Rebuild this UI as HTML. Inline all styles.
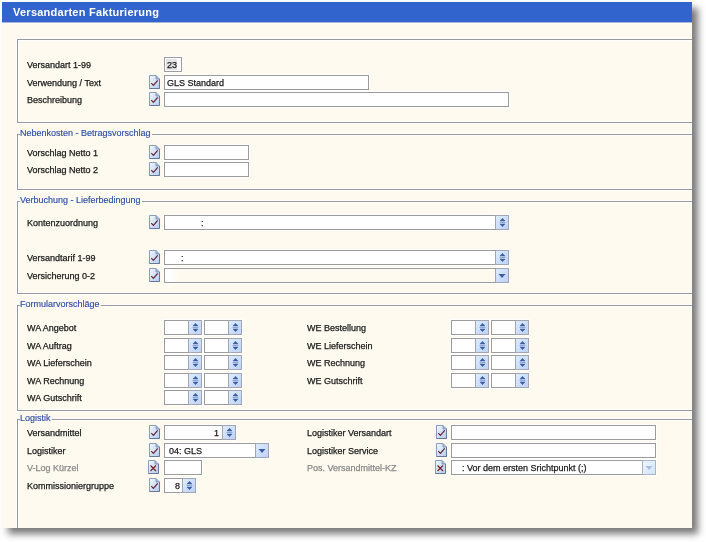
<!DOCTYPE html><html><head><meta charset="utf-8"><style>
html,body{margin:0;padding:0}
body{width:706px;height:542px;overflow:hidden;position:relative;background:#fff;font-family:"Liberation Sans", sans-serif}
#sh{position:absolute;left:2px;top:2px;width:690px;height:526px;box-shadow:6px 6px 7px rgba(0,0,0,0.52)}
#win{position:absolute;left:0;top:0;width:692px;height:528px;overflow:hidden;will-change:transform}
#bg{position:absolute;left:2px;top:2px;width:690px;height:526px;background:#fefaef}
#tb{position:absolute;left:2px;top:2px;width:690px;height:20px;background:#3264cd;box-shadow:0 1px 0 #aab4d6, 0 2px 0 #fff}
#tt{position:absolute;left:13px;top:6px;font-weight:bold;font-size:11px;line-height:13px;color:#fff;letter-spacing:0.25px;white-space:nowrap}
.lb{position:absolute;font-size:9px;line-height:10px;white-space:nowrap;-webkit-text-stroke:0.25px currentColor}
.bx{position:absolute;border:1px solid #9c9c9c;box-shadow:0 0 0 1px rgba(255,255,255,0.85)}
.bt{position:absolute;width:12px;height:13px;border:1px solid #a3a6b0;background:linear-gradient(135deg,#dcecff,#c0d2f6)}
.bt svg{position:absolute;left:0;top:0}
.bt.dis{background:linear-gradient(135deg,#eef5ff,#d4e4fa);border-color:#a9b4c4}
.ic{position:absolute;width:11px;height:14px}
.ic svg{display:block}
.gb{position:absolute;left:17px;width:700px;border:1px solid #9a9a9a;box-shadow:inset 0 0 0 1px #fff, 0 0 0 1px #fff}
.lg{position:absolute;left:20px;font-size:9px;-webkit-text-stroke:0.15px currentColor;line-height:14px;color:#2e4ea8;background:#fefaef;padding:0 1px 0 0;white-space:nowrap}
.tx{position:absolute;font-size:9px;line-height:10px;white-space:nowrap;color:#1a1a1a;-webkit-text-stroke:0.25px currentColor}
</style></head><body>
<div id="sh"></div>
<div id="win">
<div id="bg"></div>
<div id="tb"></div>
<div id="tt">Versandarten Fakturierung</div>

<div class="gb" style="top:39px;height:82px"></div>
<div class="gb" style="top:134px;height:54px"></div>
<div class="lg" style="top:126px">Nebenkosten - Betragsvorschlag</div>
<div class="gb" style="top:201px;height:91px"></div>
<div class="lg" style="top:193px">Verbuchung - Lieferbedingung</div>
<div class="gb" style="top:305px;height:104px"></div>
<div class="lg" style="top:297px">Formularvorschläge</div>
<div class="gb" style="top:419px;height:140px"></div>
<div class="lg" style="top:411px">Logistik</div>
<div class="lb" style="left:27px;top:60px;color:#1a1a1a;">Versandart 1-99</div>
<div class="bx" style="left:164px;top:57px;width:16px;height:13px;background:#fff"></div>
<div style="position:absolute;left:166px;top:59px;width:11px;height:11px;background:#e4e4e4"></div>
<div class="tx" style="left:167px;top:60px">23</div>
<div class="lb" style="left:27px;top:78px;color:#1a1a1a;">Verwendung / Text</div>
<div class="ic" style="left:149px;top:75px"><svg width="11" height="14" viewBox="0 0 11 14"><defs><linearGradient id="g1" x1="0" y1="0" x2="1" y2="1"><stop offset="0" stop-color="#f2f8ff"/><stop offset="1" stop-color="#b4cbee"/></linearGradient></defs><path d="M0.5 0.5 H7 L10.5 4 V13.5 H0.5 Z" fill="url(#g1)" stroke="#8b9dbd"/><path d="M10.5 4 V13.5 H0.5" fill="none" stroke="#66789a"/><path d="M7 0.5 V4 H10.5" fill="#a3b8dc" stroke="#7d8fb0" stroke-width="0.8"/><path d="M2.3 8.2 L4.4 10.3 L8.7 5.4" fill="none" stroke="#65202e" stroke-width="1.15"/></svg></div>
<div class="bx" style="left:164px;top:75px;width:203px;height:13px;background:#fff"></div>
<div class="tx" style="left:167px;top:78px">GLS Standard</div>
<div class="lb" style="left:27px;top:95px;color:#1a1a1a;">Beschreibung</div>
<div class="ic" style="left:149px;top:92px"><svg width="11" height="14" viewBox="0 0 11 14"><defs><linearGradient id="g2" x1="0" y1="0" x2="1" y2="1"><stop offset="0" stop-color="#f2f8ff"/><stop offset="1" stop-color="#b4cbee"/></linearGradient></defs><path d="M0.5 0.5 H7 L10.5 4 V13.5 H0.5 Z" fill="url(#g2)" stroke="#8b9dbd"/><path d="M10.5 4 V13.5 H0.5" fill="none" stroke="#66789a"/><path d="M7 0.5 V4 H10.5" fill="#a3b8dc" stroke="#7d8fb0" stroke-width="0.8"/><path d="M2.3 8.2 L4.4 10.3 L8.7 5.4" fill="none" stroke="#65202e" stroke-width="1.15"/></svg></div>
<div class="bx" style="left:164px;top:92px;width:343px;height:13px;background:#fff"></div>
<div class="lb" style="left:27px;top:148px;color:#1a1a1a;">Vorschlag Netto 1</div>
<div class="ic" style="left:149px;top:145px"><svg width="11" height="14" viewBox="0 0 11 14"><defs><linearGradient id="g3" x1="0" y1="0" x2="1" y2="1"><stop offset="0" stop-color="#f2f8ff"/><stop offset="1" stop-color="#b4cbee"/></linearGradient></defs><path d="M0.5 0.5 H7 L10.5 4 V13.5 H0.5 Z" fill="url(#g3)" stroke="#8b9dbd"/><path d="M10.5 4 V13.5 H0.5" fill="none" stroke="#66789a"/><path d="M7 0.5 V4 H10.5" fill="#a3b8dc" stroke="#7d8fb0" stroke-width="0.8"/><path d="M2.3 8.2 L4.4 10.3 L8.7 5.4" fill="none" stroke="#65202e" stroke-width="1.15"/></svg></div>
<div class="bx" style="left:164px;top:145px;width:83px;height:13px;background:#fff"></div>
<div class="lb" style="left:27px;top:165px;color:#1a1a1a;">Vorschlag Netto 2</div>
<div class="ic" style="left:149px;top:162px"><svg width="11" height="14" viewBox="0 0 11 14"><defs><linearGradient id="g4" x1="0" y1="0" x2="1" y2="1"><stop offset="0" stop-color="#f2f8ff"/><stop offset="1" stop-color="#b4cbee"/></linearGradient></defs><path d="M0.5 0.5 H7 L10.5 4 V13.5 H0.5 Z" fill="url(#g4)" stroke="#8b9dbd"/><path d="M10.5 4 V13.5 H0.5" fill="none" stroke="#66789a"/><path d="M7 0.5 V4 H10.5" fill="#a3b8dc" stroke="#7d8fb0" stroke-width="0.8"/><path d="M2.3 8.2 L4.4 10.3 L8.7 5.4" fill="none" stroke="#65202e" stroke-width="1.15"/></svg></div>
<div class="bx" style="left:164px;top:162px;width:83px;height:13px;background:#fff"></div>
<div class="lb" style="left:27px;top:218px;color:#1a1a1a;">Kontenzuordnung</div>
<div class="ic" style="left:149px;top:215px"><svg width="11" height="14" viewBox="0 0 11 14"><defs><linearGradient id="g5" x1="0" y1="0" x2="1" y2="1"><stop offset="0" stop-color="#f2f8ff"/><stop offset="1" stop-color="#b4cbee"/></linearGradient></defs><path d="M0.5 0.5 H7 L10.5 4 V13.5 H0.5 Z" fill="url(#g5)" stroke="#8b9dbd"/><path d="M10.5 4 V13.5 H0.5" fill="none" stroke="#66789a"/><path d="M7 0.5 V4 H10.5" fill="#a3b8dc" stroke="#7d8fb0" stroke-width="0.8"/><path d="M2.3 8.2 L4.4 10.3 L8.7 5.4" fill="none" stroke="#65202e" stroke-width="1.15"/></svg></div>
<div class="bx" style="left:164px;top:215px;width:343px;height:13px;background:#fff"></div>
<div class="bt" style="left:495px;top:215px"><svg width="12" height="13" viewBox="0 0 12 13"><path d="M3.5 6.5 H9.5" stroke="#8fa9d6" stroke-width="1"/><path d="M4 5 L6.5 2.3 L9 5 Z M4 8 L9 8 L6.5 10.7 Z" fill="#3b5ea6" stroke="#3b5ea6" stroke-width="0.5" stroke-linejoin="round"/></svg></div>
<div class="tx" style="left:201px;top:218px">:</div>
<div class="lb" style="left:27px;top:253px;color:#1a1a1a;">Versandtarif 1-99</div>
<div class="ic" style="left:149px;top:250px"><svg width="11" height="14" viewBox="0 0 11 14"><defs><linearGradient id="g6" x1="0" y1="0" x2="1" y2="1"><stop offset="0" stop-color="#f2f8ff"/><stop offset="1" stop-color="#b4cbee"/></linearGradient></defs><path d="M0.5 0.5 H7 L10.5 4 V13.5 H0.5 Z" fill="url(#g6)" stroke="#8b9dbd"/><path d="M10.5 4 V13.5 H0.5" fill="none" stroke="#66789a"/><path d="M7 0.5 V4 H10.5" fill="#a3b8dc" stroke="#7d8fb0" stroke-width="0.8"/><path d="M2.3 8.2 L4.4 10.3 L8.7 5.4" fill="none" stroke="#65202e" stroke-width="1.15"/></svg></div>
<div class="bx" style="left:164px;top:250px;width:343px;height:13px;background:#fff"></div>
<div class="bt" style="left:495px;top:250px"><svg width="12" height="13" viewBox="0 0 12 13"><path d="M3.5 6.5 H9.5" stroke="#8fa9d6" stroke-width="1"/><path d="M4 5 L6.5 2.3 L9 5 Z M4 8 L9 8 L6.5 10.7 Z" fill="#3b5ea6" stroke="#3b5ea6" stroke-width="0.5" stroke-linejoin="round"/></svg></div>
<div class="tx" style="left:181px;top:253px">:</div>
<div class="lb" style="left:27px;top:271px;color:#1a1a1a;">Versicherung 0-2</div>
<div class="ic" style="left:149px;top:268px"><svg width="11" height="14" viewBox="0 0 11 14"><defs><linearGradient id="g7" x1="0" y1="0" x2="1" y2="1"><stop offset="0" stop-color="#f2f8ff"/><stop offset="1" stop-color="#b4cbee"/></linearGradient></defs><path d="M0.5 0.5 H7 L10.5 4 V13.5 H0.5 Z" fill="url(#g7)" stroke="#8b9dbd"/><path d="M10.5 4 V13.5 H0.5" fill="none" stroke="#66789a"/><path d="M7 0.5 V4 H10.5" fill="#a3b8dc" stroke="#7d8fb0" stroke-width="0.8"/><path d="M2.3 8.2 L4.4 10.3 L8.7 5.4" fill="none" stroke="#65202e" stroke-width="1.15"/></svg></div>
<div class="bx" style="left:164px;top:268px;width:343px;height:13px;background:linear-gradient(90deg,#fff 0,#fff 4px,#fefaf0 14px)"></div>
<div class="bt" style="left:495px;top:268px"><svg width="12" height="13" viewBox="0 0 12 13"><path d="M2.5 5 L9.5 5 L6 9 Z" fill="#3b5ea6"/></svg></div>
<div class="lb" style="left:27px;top:323px;color:#1a1a1a;">WA Angebot</div>
<div class="bx" style="left:164px;top:320px;width:36px;height:13px;background:#fff"></div>
<div class="bt" style="left:188px;top:320px"><svg width="12" height="13" viewBox="0 0 12 13"><path d="M3.5 6.5 H9.5" stroke="#8fa9d6" stroke-width="1"/><path d="M4 5 L6.5 2.3 L9 5 Z M4 8 L9 8 L6.5 10.7 Z" fill="#3b5ea6" stroke="#3b5ea6" stroke-width="0.5" stroke-linejoin="round"/></svg></div>
<div class="bx" style="left:204px;top:320px;width:36px;height:13px;background:#fff"></div>
<div class="bt" style="left:228px;top:320px"><svg width="12" height="13" viewBox="0 0 12 13"><path d="M3.5 6.5 H9.5" stroke="#8fa9d6" stroke-width="1"/><path d="M4 5 L6.5 2.3 L9 5 Z M4 8 L9 8 L6.5 10.7 Z" fill="#3b5ea6" stroke="#3b5ea6" stroke-width="0.5" stroke-linejoin="round"/></svg></div>
<div class="lb" style="left:27px;top:341px;color:#1a1a1a;">WA Auftrag</div>
<div class="bx" style="left:164px;top:338px;width:36px;height:13px;background:#fff"></div>
<div class="bt" style="left:188px;top:338px"><svg width="12" height="13" viewBox="0 0 12 13"><path d="M3.5 6.5 H9.5" stroke="#8fa9d6" stroke-width="1"/><path d="M4 5 L6.5 2.3 L9 5 Z M4 8 L9 8 L6.5 10.7 Z" fill="#3b5ea6" stroke="#3b5ea6" stroke-width="0.5" stroke-linejoin="round"/></svg></div>
<div class="bx" style="left:204px;top:338px;width:36px;height:13px;background:#fff"></div>
<div class="bt" style="left:228px;top:338px"><svg width="12" height="13" viewBox="0 0 12 13"><path d="M3.5 6.5 H9.5" stroke="#8fa9d6" stroke-width="1"/><path d="M4 5 L6.5 2.3 L9 5 Z M4 8 L9 8 L6.5 10.7 Z" fill="#3b5ea6" stroke="#3b5ea6" stroke-width="0.5" stroke-linejoin="round"/></svg></div>
<div class="lb" style="left:27px;top:358px;color:#1a1a1a;">WA Lieferschein</div>
<div class="bx" style="left:164px;top:355px;width:36px;height:13px;background:#fff"></div>
<div class="bt" style="left:188px;top:355px"><svg width="12" height="13" viewBox="0 0 12 13"><path d="M3.5 6.5 H9.5" stroke="#8fa9d6" stroke-width="1"/><path d="M4 5 L6.5 2.3 L9 5 Z M4 8 L9 8 L6.5 10.7 Z" fill="#3b5ea6" stroke="#3b5ea6" stroke-width="0.5" stroke-linejoin="round"/></svg></div>
<div class="bx" style="left:204px;top:355px;width:36px;height:13px;background:#fff"></div>
<div class="bt" style="left:228px;top:355px"><svg width="12" height="13" viewBox="0 0 12 13"><path d="M3.5 6.5 H9.5" stroke="#8fa9d6" stroke-width="1"/><path d="M4 5 L6.5 2.3 L9 5 Z M4 8 L9 8 L6.5 10.7 Z" fill="#3b5ea6" stroke="#3b5ea6" stroke-width="0.5" stroke-linejoin="round"/></svg></div>
<div class="lb" style="left:27px;top:376px;color:#1a1a1a;">WA Rechnung</div>
<div class="bx" style="left:164px;top:373px;width:36px;height:13px;background:#fff"></div>
<div class="bt" style="left:188px;top:373px"><svg width="12" height="13" viewBox="0 0 12 13"><path d="M3.5 6.5 H9.5" stroke="#8fa9d6" stroke-width="1"/><path d="M4 5 L6.5 2.3 L9 5 Z M4 8 L9 8 L6.5 10.7 Z" fill="#3b5ea6" stroke="#3b5ea6" stroke-width="0.5" stroke-linejoin="round"/></svg></div>
<div class="bx" style="left:204px;top:373px;width:36px;height:13px;background:#fff"></div>
<div class="bt" style="left:228px;top:373px"><svg width="12" height="13" viewBox="0 0 12 13"><path d="M3.5 6.5 H9.5" stroke="#8fa9d6" stroke-width="1"/><path d="M4 5 L6.5 2.3 L9 5 Z M4 8 L9 8 L6.5 10.7 Z" fill="#3b5ea6" stroke="#3b5ea6" stroke-width="0.5" stroke-linejoin="round"/></svg></div>
<div class="lb" style="left:27px;top:393px;color:#1a1a1a;">WA Gutschrift</div>
<div class="bx" style="left:164px;top:390px;width:36px;height:13px;background:#fff"></div>
<div class="bt" style="left:188px;top:390px"><svg width="12" height="13" viewBox="0 0 12 13"><path d="M3.5 6.5 H9.5" stroke="#8fa9d6" stroke-width="1"/><path d="M4 5 L6.5 2.3 L9 5 Z M4 8 L9 8 L6.5 10.7 Z" fill="#3b5ea6" stroke="#3b5ea6" stroke-width="0.5" stroke-linejoin="round"/></svg></div>
<div class="bx" style="left:204px;top:390px;width:36px;height:13px;background:#fff"></div>
<div class="bt" style="left:228px;top:390px"><svg width="12" height="13" viewBox="0 0 12 13"><path d="M3.5 6.5 H9.5" stroke="#8fa9d6" stroke-width="1"/><path d="M4 5 L6.5 2.3 L9 5 Z M4 8 L9 8 L6.5 10.7 Z" fill="#3b5ea6" stroke="#3b5ea6" stroke-width="0.5" stroke-linejoin="round"/></svg></div>
<div class="lb" style="left:307px;top:323px;color:#1a1a1a;">WE Bestellung</div>
<div class="bx" style="left:451px;top:320px;width:36px;height:13px;background:#fff"></div>
<div class="bt" style="left:475px;top:320px"><svg width="12" height="13" viewBox="0 0 12 13"><path d="M3.5 6.5 H9.5" stroke="#8fa9d6" stroke-width="1"/><path d="M4 5 L6.5 2.3 L9 5 Z M4 8 L9 8 L6.5 10.7 Z" fill="#3b5ea6" stroke="#3b5ea6" stroke-width="0.5" stroke-linejoin="round"/></svg></div>
<div class="bx" style="left:491px;top:320px;width:36px;height:13px;background:#fff"></div>
<div class="bt" style="left:515px;top:320px"><svg width="12" height="13" viewBox="0 0 12 13"><path d="M3.5 6.5 H9.5" stroke="#8fa9d6" stroke-width="1"/><path d="M4 5 L6.5 2.3 L9 5 Z M4 8 L9 8 L6.5 10.7 Z" fill="#3b5ea6" stroke="#3b5ea6" stroke-width="0.5" stroke-linejoin="round"/></svg></div>
<div class="lb" style="left:307px;top:341px;color:#1a1a1a;">WE Lieferschein</div>
<div class="bx" style="left:451px;top:338px;width:36px;height:13px;background:#fff"></div>
<div class="bt" style="left:475px;top:338px"><svg width="12" height="13" viewBox="0 0 12 13"><path d="M3.5 6.5 H9.5" stroke="#8fa9d6" stroke-width="1"/><path d="M4 5 L6.5 2.3 L9 5 Z M4 8 L9 8 L6.5 10.7 Z" fill="#3b5ea6" stroke="#3b5ea6" stroke-width="0.5" stroke-linejoin="round"/></svg></div>
<div class="bx" style="left:491px;top:338px;width:36px;height:13px;background:#fff"></div>
<div class="bt" style="left:515px;top:338px"><svg width="12" height="13" viewBox="0 0 12 13"><path d="M3.5 6.5 H9.5" stroke="#8fa9d6" stroke-width="1"/><path d="M4 5 L6.5 2.3 L9 5 Z M4 8 L9 8 L6.5 10.7 Z" fill="#3b5ea6" stroke="#3b5ea6" stroke-width="0.5" stroke-linejoin="round"/></svg></div>
<div class="lb" style="left:307px;top:358px;color:#1a1a1a;">WE Rechnung</div>
<div class="bx" style="left:451px;top:355px;width:36px;height:13px;background:#fff"></div>
<div class="bt" style="left:475px;top:355px"><svg width="12" height="13" viewBox="0 0 12 13"><path d="M3.5 6.5 H9.5" stroke="#8fa9d6" stroke-width="1"/><path d="M4 5 L6.5 2.3 L9 5 Z M4 8 L9 8 L6.5 10.7 Z" fill="#3b5ea6" stroke="#3b5ea6" stroke-width="0.5" stroke-linejoin="round"/></svg></div>
<div class="bx" style="left:491px;top:355px;width:36px;height:13px;background:#fff"></div>
<div class="bt" style="left:515px;top:355px"><svg width="12" height="13" viewBox="0 0 12 13"><path d="M3.5 6.5 H9.5" stroke="#8fa9d6" stroke-width="1"/><path d="M4 5 L6.5 2.3 L9 5 Z M4 8 L9 8 L6.5 10.7 Z" fill="#3b5ea6" stroke="#3b5ea6" stroke-width="0.5" stroke-linejoin="round"/></svg></div>
<div class="lb" style="left:307px;top:376px;color:#1a1a1a;">WE Gutschrift</div>
<div class="bx" style="left:451px;top:373px;width:36px;height:13px;background:#fff"></div>
<div class="bt" style="left:475px;top:373px"><svg width="12" height="13" viewBox="0 0 12 13"><path d="M3.5 6.5 H9.5" stroke="#8fa9d6" stroke-width="1"/><path d="M4 5 L6.5 2.3 L9 5 Z M4 8 L9 8 L6.5 10.7 Z" fill="#3b5ea6" stroke="#3b5ea6" stroke-width="0.5" stroke-linejoin="round"/></svg></div>
<div class="bx" style="left:491px;top:373px;width:36px;height:13px;background:#fff"></div>
<div class="bt" style="left:515px;top:373px"><svg width="12" height="13" viewBox="0 0 12 13"><path d="M3.5 6.5 H9.5" stroke="#8fa9d6" stroke-width="1"/><path d="M4 5 L6.5 2.3 L9 5 Z M4 8 L9 8 L6.5 10.7 Z" fill="#3b5ea6" stroke="#3b5ea6" stroke-width="0.5" stroke-linejoin="round"/></svg></div>
<div class="lb" style="left:27px;top:428px;color:#1a1a1a;">Versandmittel</div>
<div class="ic" style="left:149px;top:425px"><svg width="11" height="14" viewBox="0 0 11 14"><defs><linearGradient id="g8" x1="0" y1="0" x2="1" y2="1"><stop offset="0" stop-color="#f2f8ff"/><stop offset="1" stop-color="#b4cbee"/></linearGradient></defs><path d="M0.5 0.5 H7 L10.5 4 V13.5 H0.5 Z" fill="url(#g8)" stroke="#8b9dbd"/><path d="M10.5 4 V13.5 H0.5" fill="none" stroke="#66789a"/><path d="M7 0.5 V4 H10.5" fill="#a3b8dc" stroke="#7d8fb0" stroke-width="0.8"/><path d="M2.3 8.2 L4.4 10.3 L8.7 5.4" fill="none" stroke="#65202e" stroke-width="1.15"/></svg></div>
<div class="bx" style="left:164px;top:425px;width:70px;height:13px;background:#fff"></div>
<div class="bt" style="left:222px;top:425px"><svg width="12" height="13" viewBox="0 0 12 13"><path d="M3.5 6.5 H9.5" stroke="#8fa9d6" stroke-width="1"/><path d="M4 5 L6.5 2.3 L9 5 Z M4 8 L9 8 L6.5 10.7 Z" fill="#3b5ea6" stroke="#3b5ea6" stroke-width="0.5" stroke-linejoin="round"/></svg></div>
<div class="tx" style="left:214px;top:428px">1</div>
<div class="lb" style="left:27px;top:446px;color:#1a1a1a;">Logistiker</div>
<div class="ic" style="left:149px;top:443px"><svg width="11" height="14" viewBox="0 0 11 14"><defs><linearGradient id="g9" x1="0" y1="0" x2="1" y2="1"><stop offset="0" stop-color="#f2f8ff"/><stop offset="1" stop-color="#b4cbee"/></linearGradient></defs><path d="M0.5 0.5 H7 L10.5 4 V13.5 H0.5 Z" fill="url(#g9)" stroke="#8b9dbd"/><path d="M10.5 4 V13.5 H0.5" fill="none" stroke="#66789a"/><path d="M7 0.5 V4 H10.5" fill="#a3b8dc" stroke="#7d8fb0" stroke-width="0.8"/><path d="M2.3 8.2 L4.4 10.3 L8.7 5.4" fill="none" stroke="#65202e" stroke-width="1.15"/></svg></div>
<div class="bx" style="left:164px;top:443px;width:103px;height:13px;background:#fff"></div>
<div class="bt" style="left:255px;top:443px"><svg width="12" height="13" viewBox="0 0 12 13"><path d="M2.5 5 L9.5 5 L6 9 Z" fill="#3b5ea6"/></svg></div>
<div class="tx" style="left:169px;top:446px">04: GLS</div>
<div class="lb" style="left:27px;top:463px;color:#8a8a8a;">V-Log Kürzel</div>
<div class="ic" style="left:148px;top:460px"><svg width="11" height="14" viewBox="0 0 11 14"><defs><linearGradient id="g10" x1="0" y1="0" x2="1" y2="1"><stop offset="0" stop-color="#f2f8ff"/><stop offset="1" stop-color="#b4cbee"/></linearGradient></defs><path d="M0.5 0.5 H7 L10.5 4 V13.5 H0.5 Z" fill="url(#g10)" stroke="#8b9dbd"/><path d="M10.5 4 V13.5 H0.5" fill="none" stroke="#66789a"/><path d="M7 0.5 V4 H10.5" fill="#a3b8dc" stroke="#7d8fb0" stroke-width="0.8"/><path d="M2.5 5.5 L8 11 M8 5.5 L2.5 11" fill="none" stroke="#7a2232" stroke-width="1.3"/></svg></div>
<div class="bx" style="left:164px;top:460px;width:36px;height:13px;background:#fff"></div>
<div class="lb" style="left:27px;top:481px;color:#1a1a1a;">Kommissioniergruppe</div>
<div class="ic" style="left:149px;top:478px"><svg width="11" height="14" viewBox="0 0 11 14"><defs><linearGradient id="g11" x1="0" y1="0" x2="1" y2="1"><stop offset="0" stop-color="#f2f8ff"/><stop offset="1" stop-color="#b4cbee"/></linearGradient></defs><path d="M0.5 0.5 H7 L10.5 4 V13.5 H0.5 Z" fill="url(#g11)" stroke="#8b9dbd"/><path d="M10.5 4 V13.5 H0.5" fill="none" stroke="#66789a"/><path d="M7 0.5 V4 H10.5" fill="#a3b8dc" stroke="#7d8fb0" stroke-width="0.8"/><path d="M2.3 8.2 L4.4 10.3 L8.7 5.4" fill="none" stroke="#65202e" stroke-width="1.15"/></svg></div>
<div class="bx" style="left:164px;top:478px;width:30px;height:13px;background:#fff"></div>
<div class="bt" style="left:182px;top:478px"><svg width="12" height="13" viewBox="0 0 12 13"><path d="M3.5 6.5 H9.5" stroke="#8fa9d6" stroke-width="1"/><path d="M4 5 L6.5 2.3 L9 5 Z M4 8 L9 8 L6.5 10.7 Z" fill="#3b5ea6" stroke="#3b5ea6" stroke-width="0.5" stroke-linejoin="round"/></svg></div>
<div class="tx" style="left:175px;top:481px">8</div>
<div class="lb" style="left:307px;top:428px;color:#1a1a1a;">Logistiker Versandart</div>
<div class="ic" style="left:436px;top:425px"><svg width="11" height="14" viewBox="0 0 11 14"><defs><linearGradient id="g12" x1="0" y1="0" x2="1" y2="1"><stop offset="0" stop-color="#f2f8ff"/><stop offset="1" stop-color="#b4cbee"/></linearGradient></defs><path d="M0.5 0.5 H7 L10.5 4 V13.5 H0.5 Z" fill="url(#g12)" stroke="#8b9dbd"/><path d="M10.5 4 V13.5 H0.5" fill="none" stroke="#66789a"/><path d="M7 0.5 V4 H10.5" fill="#a3b8dc" stroke="#7d8fb0" stroke-width="0.8"/><path d="M2.3 8.2 L4.4 10.3 L8.7 5.4" fill="none" stroke="#65202e" stroke-width="1.15"/></svg></div>
<div class="bx" style="left:451px;top:425px;width:203px;height:13px;background:#fff"></div>
<div class="lb" style="left:307px;top:446px;color:#1a1a1a;">Logistiker Service</div>
<div class="ic" style="left:436px;top:443px"><svg width="11" height="14" viewBox="0 0 11 14"><defs><linearGradient id="g13" x1="0" y1="0" x2="1" y2="1"><stop offset="0" stop-color="#f2f8ff"/><stop offset="1" stop-color="#b4cbee"/></linearGradient></defs><path d="M0.5 0.5 H7 L10.5 4 V13.5 H0.5 Z" fill="url(#g13)" stroke="#8b9dbd"/><path d="M10.5 4 V13.5 H0.5" fill="none" stroke="#66789a"/><path d="M7 0.5 V4 H10.5" fill="#a3b8dc" stroke="#7d8fb0" stroke-width="0.8"/><path d="M2.3 8.2 L4.4 10.3 L8.7 5.4" fill="none" stroke="#65202e" stroke-width="1.15"/></svg></div>
<div class="bx" style="left:451px;top:443px;width:203px;height:13px;background:#fff"></div>
<div class="lb" style="left:307px;top:463px;color:#8a8a8a;">Pos. Versandmittel-KZ</div>
<div class="ic" style="left:435px;top:460px"><svg width="11" height="14" viewBox="0 0 11 14"><defs><linearGradient id="g14" x1="0" y1="0" x2="1" y2="1"><stop offset="0" stop-color="#f2f8ff"/><stop offset="1" stop-color="#b4cbee"/></linearGradient></defs><path d="M0.5 0.5 H7 L10.5 4 V13.5 H0.5 Z" fill="url(#g14)" stroke="#8b9dbd"/><path d="M10.5 4 V13.5 H0.5" fill="none" stroke="#66789a"/><path d="M7 0.5 V4 H10.5" fill="#a3b8dc" stroke="#7d8fb0" stroke-width="0.8"/><path d="M2.5 5.5 L8 11 M8 5.5 L2.5 11" fill="none" stroke="#7a2232" stroke-width="1.3"/></svg></div>
<div class="bx" style="left:451px;top:460px;width:203px;height:13px;background:#fff"></div>
<div class="bt dis" style="left:642px;top:460px"><svg width="12" height="13" viewBox="0 0 12 13"><path d="M2.5 5 L9.5 5 L6 9 Z" fill="#a8bede"/></svg></div>
<div class="tx" style="left:462px;top:463px">: Vor dem ersten Srichtpunkt (;)</div>
</div></body></html>
